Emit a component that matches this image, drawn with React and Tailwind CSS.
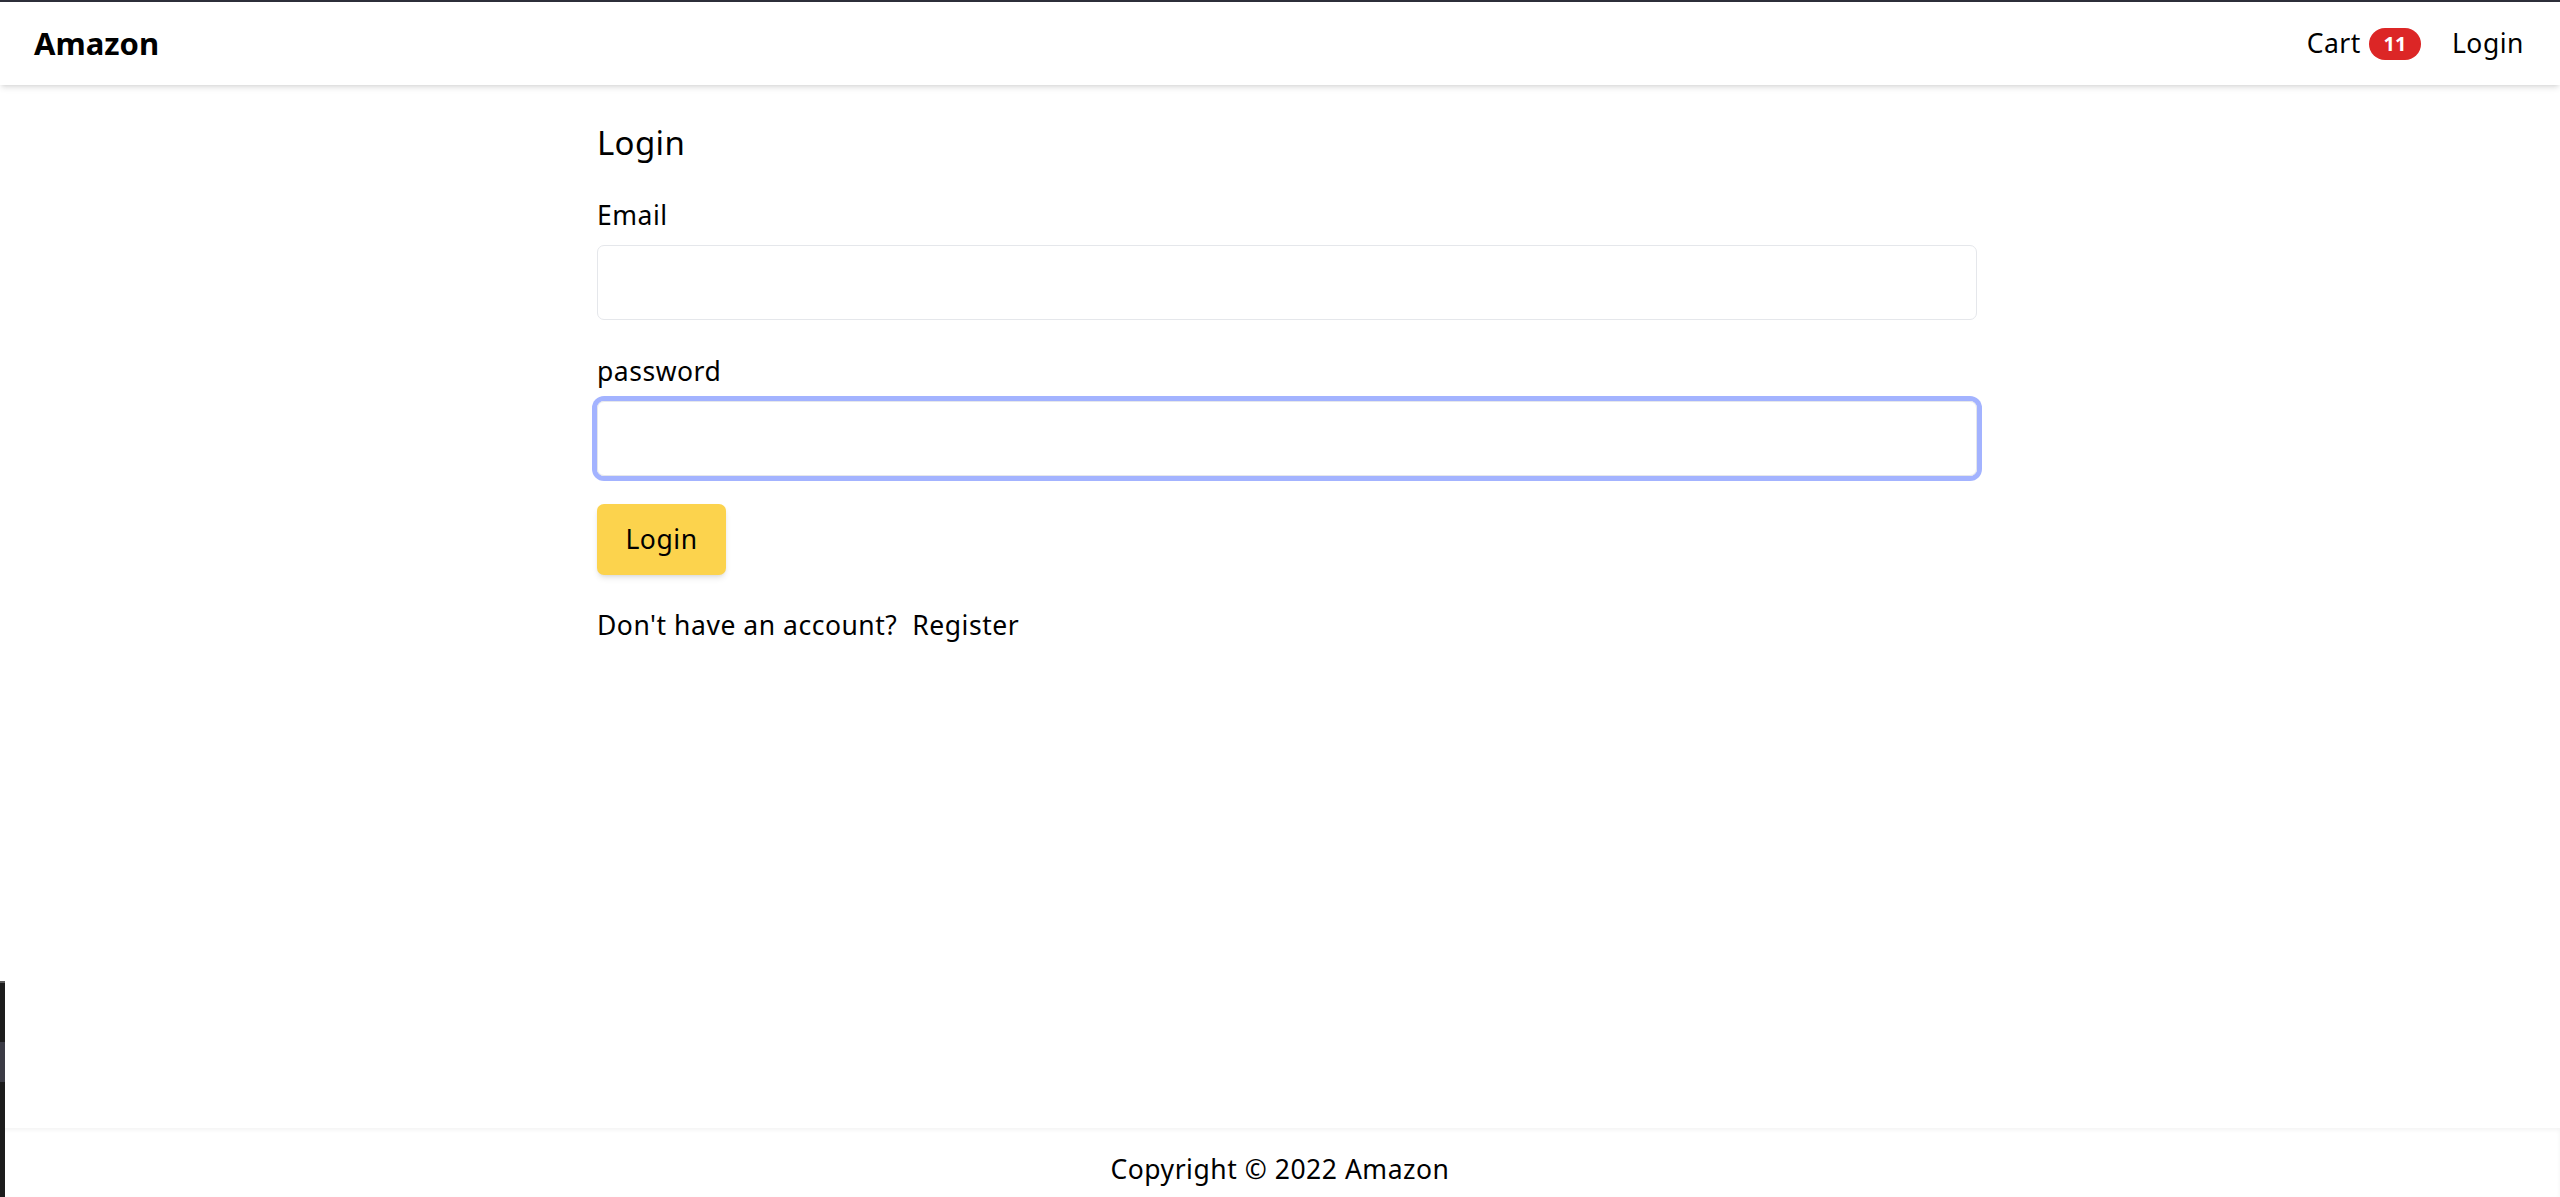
export default function App() {
  return (
    <div className="relative min-h-screen flex flex-col bg-white text-black font-['Noto_Sans',sans-serif]">
      <div className="h-[2px] bg-[#2d2f3a]" />
      <header className="h-[83px] flex items-center justify-between px-[34px] shadow-md">
        <a className="text-[31px] font-bold leading-none">Amazon</a>
        <div className="flex items-center text-[26.5px] tracking-[0.02em]">
          <a className="flex items-center">
            Cart
            <span className="ml-[8px] h-[32px] w-[52px] rounded-full bg-[#dc2626] text-white text-[20px] font-bold tracking-normal flex items-center justify-center">11</span>
          </a>
          <a className="ml-[31px] pr-[2px]">Login</a>
        </div>
      </header>

      <main className="flex-1">
        <form className="w-[1380px] ml-[597px] text-[26.5px] tracking-[0.02em]">
          <h1 className="mt-[35px] text-[33px] tracking-[0.01em] leading-[45px]">Login</h1>
          <div className="mt-[32px]">
            <label className="block leading-[36px]">Email</label>
            <input type="email" className="mt-[12px] block w-full h-[75px] rounded-[7px] border border-gray-200 outline-none" />
          </div>
          <div className="mt-[33px]">
            <label className="block leading-[36px]">password</label>
            <input type="password" className="mt-[12px] block w-full h-[75px] rounded-[7px] border border-gray-200 ring-[5px] ring-indigo-300 outline-none" />
          </div>
          <button type="button" className="mt-[28px] h-[71px] w-[129px] rounded-[7px] bg-[#fcd34d] shadow-md">Login</button>
          <div className="mt-[32px] leading-[36px]">
            Don&apos;t have an account? &nbsp;<a>Register</a>
          </div>
        </form>
      </main>

      <footer className="h-[69px] flex items-center justify-center pt-[14px] shadow-inner text-[26.5px] tracking-[0.02em]">
        Copyright © 2022 Amazon
      </footer>

      <div className="absolute left-0 bottom-0 w-[5px] h-[216px] flex flex-col bg-[#1c1c1c]">
        <div className="h-[2px] bg-[#5a5a5a]" />
        <div className="mt-[59px] h-[40px] bg-[#3b3b45]" />
      </div>
    </div>
  );
}
